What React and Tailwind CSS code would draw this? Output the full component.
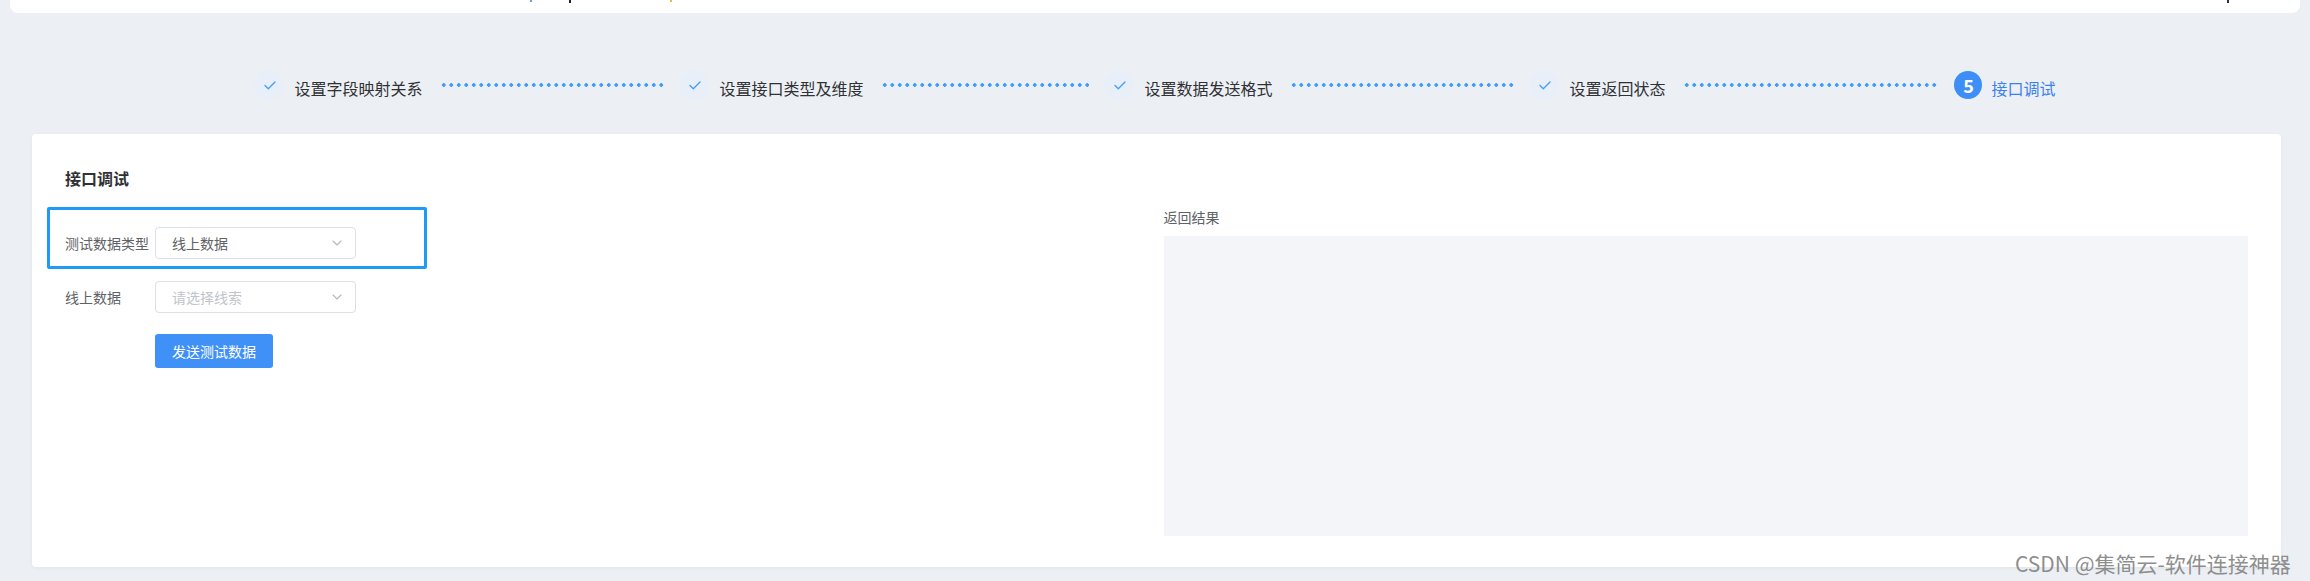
import React from "react";

const steps = ["设置字段映射关系", "设置接口类型及维度", "设置数据发送格式", "设置返回状态"];

function Check() {
  return (
    <svg width="12" height="9" viewBox="0 0 12 9" fill="none">
      <polyline points="1,4.5 4.3,7.8 11,1" stroke="#409eff" strokeWidth="1.3" strokeLinecap="round" strokeLinejoin="round" />
    </svg>
  );
}

function Chevron() {
  return (
    <svg width="10" height="6" viewBox="0 0 10 6" fill="none">
      <polyline points="1,1 5,5 9,1" stroke="#b4b8bf" strokeWidth="1.1" strokeLinecap="round" strokeLinejoin="round" />
    </svg>
  );
}

function Select({ value, placeholder }) {
  return (
    <div className="w-[201px] h-[32px] border border-[#dcdfe6] rounded-[4px] bg-white flex items-center justify-between pl-[16px] pr-[13px]">
      {value ? (
        <span className="text-[14px] text-[#606266]">{value}</span>
      ) : (
        <span className="text-[14px] text-[#c0c4cc]">{placeholder}</span>
      )}
      <Chevron />
    </div>
  );
}

export default function App() {
  return (
    <div
      className="relative w-[2310px] h-[581px] bg-[#ecf0f5] overflow-hidden"
      style={{ fontFamily: '"Noto Sans CJK SC", "Noto Sans", sans-serif' }}
    >
      {/* top bar */}
      <div className="ml-[10px] mr-[10px] h-[13px] bg-white rounded-b-[8px] flex items-start">
        <span className="ml-[520px] w-[2px] h-[2px] bg-[#6b9fd8]" />
        <span className="ml-[37px] w-[2px] h-[3px] bg-[#222]" />
        <span className="ml-[99px] w-[2px] h-[2px] bg-[#e6b85a]" />
        <span className="ml-[1555px] w-[2px] h-[3px] bg-[#333]" />
      </div>

      {/* steps */}
      <div className="mt-[57px] h-[30px] flex items-center justify-center">
        {steps.map((s) => (
          <div key={s} className="w-[425px] flex items-center">
            <div className="w-[30px] h-[30px] rounded-full bg-[#e8eff9] flex items-center justify-center shrink-0 pl-[2px]">
              <Check />
            </div>
            <span className="ml-[10px] text-[16px] leading-[30px] text-[#303133] mt-[5px] whitespace-nowrap">{s}</span>
            <div className="ml-[17px] mr-[15px] flex-1 h-[4px] -mt-[1px] bg-[radial-gradient(circle,#409eff_1.6px,transparent_1.9px)] bg-[length:7.5px_4px]" />
          </div>
        ))}
        <div className="flex items-center">
          <div className="w-[28px] h-[28px] rounded-full bg-[#3d8ef7] flex items-center justify-center text-white text-[18px] font-bold leading-none">
            5
          </div>
          <span className="ml-[9px] text-[16px] leading-[30px] text-[#3b82f0] mt-[5px] whitespace-nowrap">接口调试</span>
        </div>
      </div>

      {/* card */}
      <div className="mt-[34px] ml-[32px] mr-[29px] h-[433px] bg-white rounded-[4px] shadow-[0_1px_4px_rgba(0,0,0,0.05)] px-[33px]">
        <div className="pt-[32px] text-[16px] leading-[24px] font-bold text-[#303133]">接口调试</div>
        <div className="mt-[17px] grid grid-cols-2">
          <div>
            <div className="-ml-[18px] w-[380px] border-[3px] border-[#1d9bf6] rounded-[2px] pl-[15px] pt-[17px] pb-[7px] flex items-center">
              <span className="w-[90px] text-[14px] text-[#606266]">测试数据类型</span>
              <Select value="线上数据" />
            </div>
            <div className="mt-[12px] flex items-center">
              <span className="w-[90px] text-[14px] text-[#606266]">线上数据</span>
              <Select placeholder="请选择线索" />
            </div>
            <div className="mt-[21px] pl-[90px]">
              <button className="w-[118px] h-[34px] rounded-[3px] bg-[#3f91f8] text-white text-[14px]">
                发送测试数据
              </button>
            </div>
          </div>
          <div className="pl-[7px]">
            <div className="text-[14px] leading-[20px] text-[#606266]">返回结果</div>
            <div className="mt-[9px] h-[300px] bg-[#f3f5f9]" />
          </div>
        </div>
      </div>

      {/* watermark */}
      <div className="absolute left-[2015px] top-[550px] text-[21px] leading-[26px] text-[#8e8e8e] whitespace-nowrap">
        CSDN @集简云-软件连接神器
      </div>
    </div>
  );
}
